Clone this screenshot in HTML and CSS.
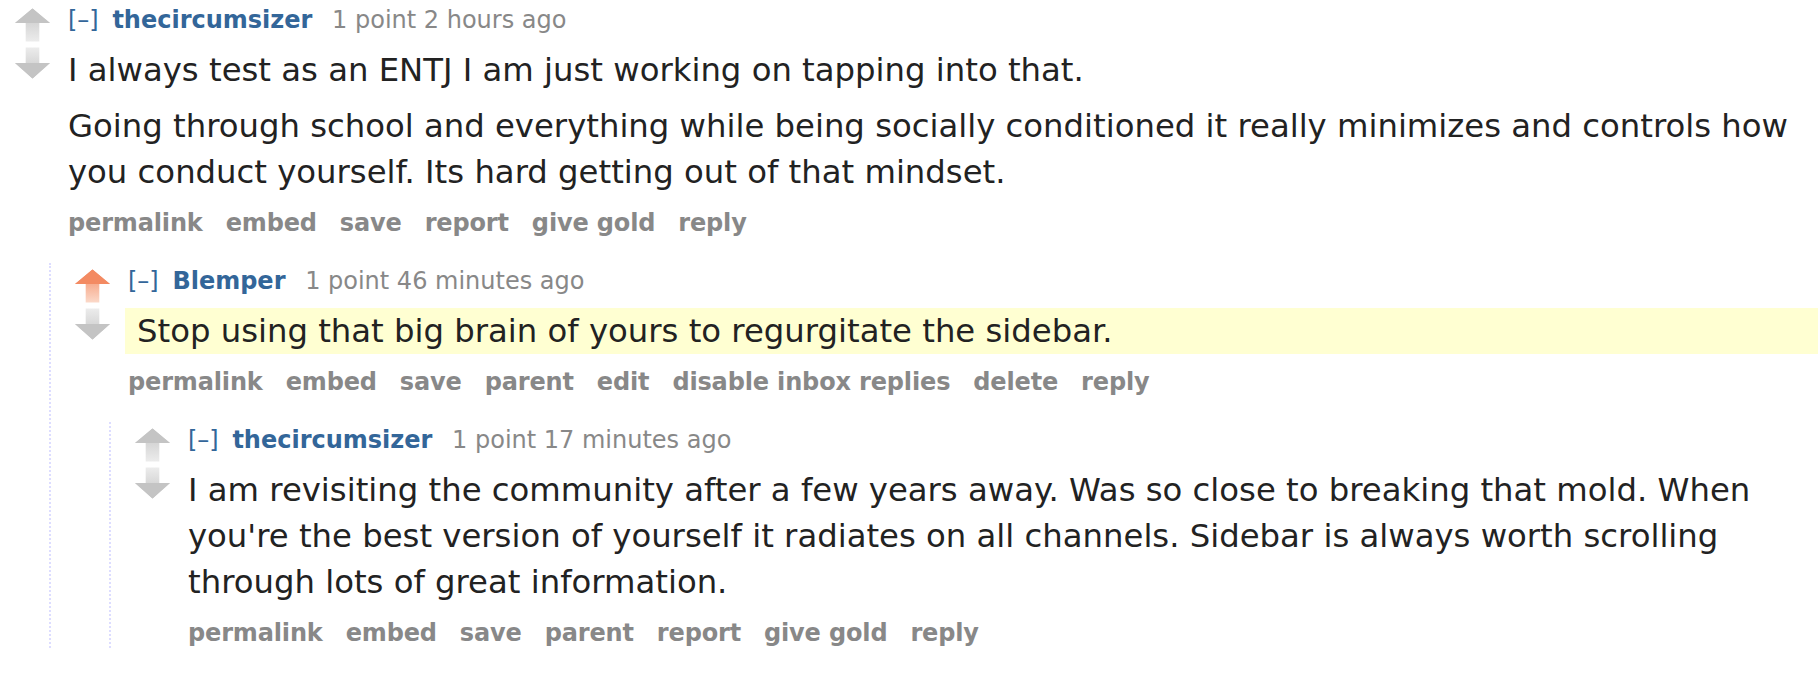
FILE: index.html
```html
<!DOCTYPE html>
<html>
<head>
<meta charset="utf-8">
<link rel="stylesheet" href="styles.css">
</head>
<body>
<div class="comment">
  <div class="row">
    <div class="midcol">
      <svg class="arrow" viewBox="0 0 36 34" width="36" height="34"><defs><linearGradient id="g1" x1="0" y1="0" x2="0" y2="1"><stop offset="0" stop-color="#c4c4c4"/><stop offset="1" stop-color="#ececec"/></linearGradient></defs><path d="M18 0 L36 15 L25 15 L25 34 L11 34 L11 15 L0 15 Z" fill="url(#g1)"/><path d="M18 0 L36 15 L0 15 Z" fill="#c4c4c4"/></svg>
      <svg class="arrow down" viewBox="0 0 36 32" width="36" height="32"><defs><linearGradient id="g2" x1="0" y1="1" x2="0" y2="0"><stop offset="0" stop-color="#c4c4c4"/><stop offset="1" stop-color="#ececec"/></linearGradient></defs><path d="M11 0 L25 0 L25 16 L36 16 L18 32 L0 16 L11 16 Z" fill="url(#g2)"/><path d="M0 16 L36 16 L18 32 Z" fill="#c4c4c4"/></svg>
    </div>
    <div class="entry">
      <p class="tagline"><span class="expand">[–]</span> <span class="author">thecircumsizer</span> <span class="score">1 point 2 hours ago</span></p>
      <div class="md">
        <p>I always test as an ENTJ I am just working on tapping into that.</p>
        <p>Going through school and everything while being socially conditioned it really minimizes and controls how you conduct yourself. Its hard getting out of that mindset.</p>
      </div>
      <ul class="buttons"><li>permalink</li><li>embed</li><li>save</li><li>report</li><li>give gold</li><li>reply</li></ul>
    </div>
  </div>
  <div class="child">
    <div class="comment">
      <div class="row">
        <div class="midcol">
          <svg class="arrow" viewBox="0 0 36 34" width="36" height="34"><defs><linearGradient id="g3" x1="0" y1="0" x2="0" y2="1"><stop offset="0" stop-color="#f38a62"/><stop offset="1" stop-color="#fbd9c9"/></linearGradient></defs><path d="M18 0 L36 15 L25 15 L25 34 L11 34 L11 15 L0 15 Z" fill="url(#g3)"/><path d="M18 0 L36 15 L0 15 Z" fill="#f38a62"/></svg>
          <svg class="arrow down" viewBox="0 0 36 32" width="36" height="32"><defs><linearGradient id="g4" x1="0" y1="1" x2="0" y2="0"><stop offset="0" stop-color="#c4c4c4"/><stop offset="1" stop-color="#ececec"/></linearGradient></defs><path d="M11 0 L25 0 L25 16 L36 16 L18 32 L0 16 L11 16 Z" fill="url(#g4)"/><path d="M0 16 L36 16 L18 32 Z" fill="#c4c4c4"/></svg>
        </div>
        <div class="entry">
          <p class="tagline"><span class="expand">[–]</span> <span class="author">Blemper</span> <span class="score">1 point 46 minutes ago</span></p>
          <div class="md mine">
            <p>Stop using that big brain of yours to regurgitate the sidebar.</p>
          </div>
          <ul class="buttons"><li>permalink</li><li>embed</li><li>save</li><li>parent</li><li>edit</li><li>disable inbox replies</li><li>delete</li><li>reply</li></ul>
        </div>
      </div>
      <div class="child">
        <div class="comment">
          <div class="row">
            <div class="midcol">
              <svg class="arrow" viewBox="0 0 36 34" width="36" height="34"><defs><linearGradient id="g5" x1="0" y1="0" x2="0" y2="1"><stop offset="0" stop-color="#c4c4c4"/><stop offset="1" stop-color="#ececec"/></linearGradient></defs><path d="M18 0 L36 15 L25 15 L25 34 L11 34 L11 15 L0 15 Z" fill="url(#g5)"/><path d="M18 0 L36 15 L0 15 Z" fill="#c4c4c4"/></svg>
              <svg class="arrow down" viewBox="0 0 36 32" width="36" height="32"><defs><linearGradient id="g6" x1="0" y1="1" x2="0" y2="0"><stop offset="0" stop-color="#c4c4c4"/><stop offset="1" stop-color="#ececec"/></linearGradient></defs><path d="M11 0 L25 0 L25 16 L36 16 L18 32 L0 16 L11 16 Z" fill="url(#g6)"/><path d="M0 16 L36 16 L18 32 Z" fill="#c4c4c4"/></svg>
            </div>
            <div class="entry">
              <p class="tagline"><span class="expand">[–]</span> <span class="author">thecircumsizer</span> <span class="score">1 point 17 minutes ago</span></p>
              <div class="md">
                <p>I am revisiting the community after a few years away. Was so close to breaking that mold. When you're the best version of yourself it radiates on all channels. Sidebar is always worth scrolling through lots of great information.</p>
              </div>
              <ul class="buttons"><li>permalink</li><li>embed</li><li>save</li><li>parent</li><li>report</li><li>give gold</li><li>reply</li></ul>
            </div>
          </div>
        </div>
      </div>
    </div>
  </div>
</div>
</body>
</html>
```
FILE: styles.css
```css
html, body {
  margin: 0;
  padding: 0;
  background: #fff;
}
body {
  padding-top: 2px;
  font-family: "DejaVu Sans", sans-serif;
  color: #222;
  overflow: hidden;
}
.comment {
  padding-top: 3px;
}
.row {
  display: flex;
  align-items: flex-start;
}
.midcol {
  margin-left: 15px;
  width: 35px;
  margin-top: 3px;
  display: flex;
  flex-direction: column;
  gap: 5px;
}
.arrow {
  display: block;
  width: 35px;
}
.entry {
  flex: 1;
  margin-left: 18px;
  min-width: 0;
}
.tagline {
  margin: 0;
  font-size: 24px;
  line-height: 30px;
  color: #888;
}
.expand {
  color: #369;
  margin-right: 6px;
}
.author {
  color: #369;
  font-weight: bold;
  margin-right: 12px;
}
.md {
  margin-top: 12px;
  font-size: 32.3px;
  line-height: 46px;
  color: #222;
}
.md p {
  margin: 0 0 10px 0;
}
.md p:last-child {
  margin-bottom: 0;
}
.md.mine {
  background: #ffffd2;
  margin-left: -3px;
  padding: 0 12px;
}
.buttons {
  list-style: none;
  margin: 13px 0 0 0;
  padding: 0;
  display: flex;
  gap: 23px;
  font-size: 24px;
  line-height: 30px;
  font-weight: bold;
  color: #888;
  letter-spacing: -0.15px;
}
.child {
  margin-top: 25px;
  margin-left: 49px;
  border-left: 2px dotted #ddf;
  padding-left: 9px;
}
```
